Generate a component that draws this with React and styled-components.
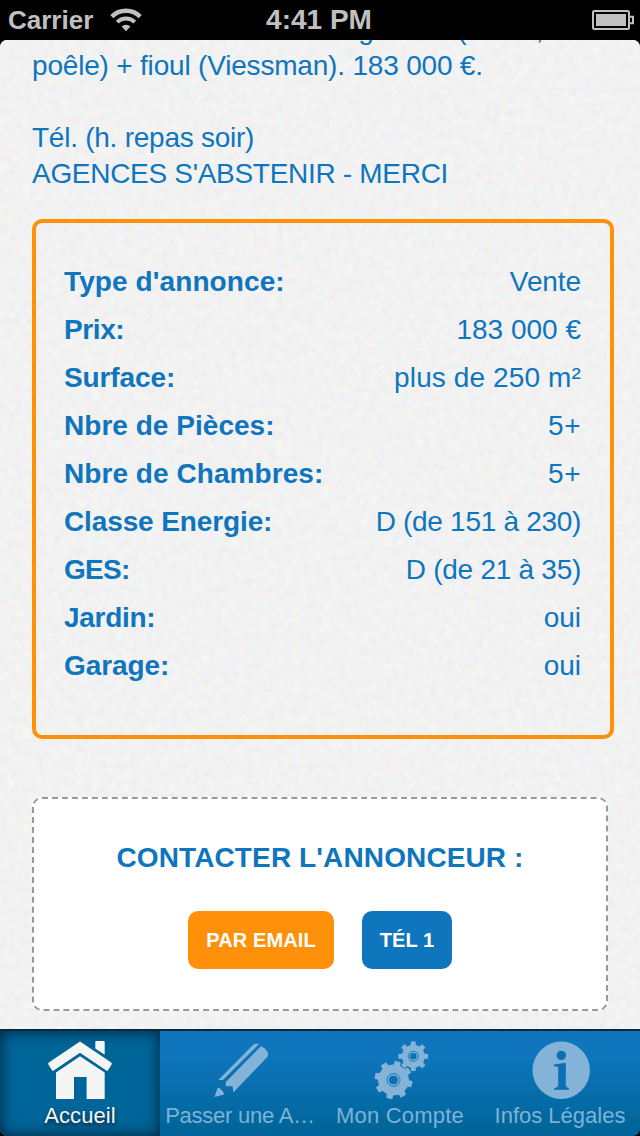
import React from "react";
import styled, { createGlobalStyle, css } from "styled-components";

const GlobalStyle = createGlobalStyle`
  body {
    margin: 0;
    background: #000;
  }

  * {
    box-sizing: border-box;
  }
`;

const Screen = styled.div`
  width: 640px;
  height: 1136px;
  display: flex;
  flex-direction: column;
  overflow: hidden;
  background: #000;
  color: #0f75bd;
  font-family: "Liberation Sans", Arial, sans-serif;
  font-size: 28px;
  white-space: nowrap;
`;

const StatusBar = styled.header`
  flex: none;
  height: 40px;
  padding: 0 6px 0 8px;
  display: grid;
  grid-template-columns: 1fr auto 1fr;
  align-items: center;
  color: #c0c0c0;
  font-size: 26px;
  font-weight: 700;
  line-height: 40px;
`;

const Carrier = styled.div`
  display: flex;
  align-items: center;
  gap: 17px;
`;

const Clock = styled.div`
  margin-right: 4px;
  font-size: 28px;
`;

const Battery = styled.div`
  display: flex;
  justify-content: flex-end;
`;

const Content = styled.main`
  position: relative;
  flex: 1;
  min-height: 0;
  overflow: hidden;
  padding: 0 26px 0 32px;
  background: #f1f1f1;
  border-radius: 7px 7px 0 0;
`;

const Paper = styled.svg`
  position: absolute;
  inset: 0;
  width: 100%;
  height: 100%;
`;

const Scrolled = styled.div`
  position: relative;
  margin-top: -28px;
`;

const Description = styled.div`
  line-height: 36px;
`;

const Line = styled.div`
  height: 36px;
  letter-spacing: ${({ $track }) => $track || 0}px;
`;

const Details = styled.dl`
  margin: 27px 0 0;
  height: 520px;
  padding: 35px 29px 35px 28px;
  border: 4px solid #ff900a;
  border-radius: 10px;
`;

const Row = styled.div`
  display: flex;
  justify-content: space-between;
  height: 48px;
  line-height: 48px;
`;

const Label = styled.dt`
  font-weight: 700;
  letter-spacing: ${({ $track }) => $track || 0}px;
`;

const Value = styled.dd`
  margin: 0;
  letter-spacing: ${({ $track }) => $track || 0}px;
`;

const Contact = styled.section`
  width: 576px;
  height: 214px;
  margin-top: 58px;
  padding-top: 41px;
  background: #fff;
  border: 2px dashed #999;
  border-radius: 10px;
  text-align: center;
`;

const Heading = styled.h2`
  margin: 0;
  font-size: 28px;
  line-height: 36px;
  letter-spacing: 0.12px;
`;

const Actions = styled.div`
  display: flex;
  justify-content: center;
  gap: 28px;
  margin-top: 35px;
`;

const Button = styled.button`
  height: 58px;
  width: ${({ $wide }) => ($wide ? 146 : 90)}px;
  padding: 0;
  border: none;
  border-radius: 10px;
  background: ${({ $primary }) => ($primary ? "#ff900a" : "#0f75bd")};
  color: #fff;
  font: 700 20px "Liberation Sans", Arial, sans-serif;
  letter-spacing: 0.1px;
`;

const TabBar = styled.nav`
  flex: none;
  height: 107px;
  display: flex;
  border-top: 2px solid #06293d;
  border-radius: 0 0 7px 7px;
  overflow: hidden;
  background: linear-gradient(#0f75bd 0%, #0f75bd 24%, #00669a 92%, #00629a 100%);
`;

const Tab = styled.a`
  width: 160px;
  display: flex;
  flex-direction: column;
  align-items: center;
  padding-top: 8px;
  color: #7eb2d6;
  font-size: 22px;
  line-height: 26px;

  svg {
    flex: none;
    display: block;
  }

  span {
    margin-top: 2px;
    letter-spacing: ${({ $track }) => $track || 0}px;
  }

  ${({ $active }) =>
    $active &&
    css`
      color: #f5f5f5;
      background: #00669a;
      box-shadow: inset 0 0 16px #002138;
      text-shadow: 0 2px 4px rgba(0, 0, 0, 0.7);
    `}
`;

// outline of a toothed wheel, angles in degrees
const gearPath = (cx, cy, outer, root, start) => {
  const points = [];
  for (let i = 0; i < 8; i++) {
    [[-12.5, root], [-9, outer], [9, outer], [12.5, root]].forEach(([a, r]) => {
      const t = ((start + i * 45 + a) * Math.PI) / 180;
      points.push(`${(cx + r * Math.sin(t)).toFixed(2)} ${(cy - r * Math.cos(t)).toFixed(2)}`);
    });
  }
  return `M${points.join("L")}Z`;
};

const WifiIcon = () => (
  <svg width="32" height="24" viewBox="0 0 32 24" fill="none" stroke="#c0c0c0">
    <path d="M1.8 8.6a20.2 20.2 0 0 1 28.4 0" strokeWidth="4.4" />
    <path d="M7.2 14.2a12.4 12.4 0 0 1 17.6 0" strokeWidth="4" />
    <path d="M16 23.2l-4.4-4.6a6.2 6.2 0 0 1 8.8 0z" fill="#c0c0c0" stroke="none" />
  </svg>
);

const BatteryIcon = () => (
  <svg width="42" height="20" viewBox="0 0 42 20">
    <rect x="1" y="1" width="36" height="18" rx="1.5" fill="none" stroke="#c0c0c0" strokeWidth="2" />
    <rect x="4" y="4" width="30" height="12" fill="#c0c0c0" />
    <path d="M38 6.8h3v6.4h-3" fill="none" stroke="#c0c0c0" strokeWidth="2" />
  </svg>
);

const HomeIcon = () => (
  <svg width="66" height="62" viewBox="0 0 66 62" fill="#f5f5f5">
    <path d="M33 2.6 64.2 23.6q1 .7.4 1.8l-3.6 5.8q-.6 1-1.7.3L33 13.7 6.7 31.5q-1.1.7-1.7-.3l-3.6-5.8q-.6-1.1.4-1.8Z" />
    <path d="M33 17.2 57.7 33.6V60H39.6V38H27V60H9V33.6Z" />
    <path d="M48.3 9.6V3q0-1 1-1h7.4q1 0 1 1v12.8Z" />
  </svg>
);

const PencilIcon = () => (
  <svg width="66" height="62" viewBox="0 0 66 62" fill="#83b4d7">
    <path d="M11.3 41 46 6q1.3-1.2 3-1.2h3.2L16 41Z" />
    <path d="M18.6 43.2 54 7.2q4.3 1.6 6.3 5.2 1.2 2.4.4 5.1L26.3 53.6 25.6 47.2H18.8Z" />
    <path d="M10.7 48.6q5 1.8 6.4 7L7.5 58Z" />
  </svg>
);

const GearsIcon = () => (
  <svg width="66" height="62" viewBox="0 0 66 62" fill="#83b4d7">
    <path d={gearPath(26.5, 41, 19.2, 15.6, 13)} />
    <path d={gearPath(46.3, 17.3, 15, 11.6, 0)} />
    <g stroke="#0b71b3" fill="none" strokeWidth="0.9">
      <circle cx="26.5" cy="41" r="6.5" />
      <circle cx="46.3" cy="17.3" r="5" />
    </g>
    <g fill="#0b71b3">
      <circle cx="26.5" cy="41" r="4.6" />
      <circle cx="46.3" cy="17.3" r="3.3" />
    </g>
  </svg>
);

const InfoIcon = () => (
  <svg width="66" height="62" viewBox="0 0 66 62">
    <circle cx="34.2" cy="31.3" r="28.7" fill="#83b4d7" />
    <g fill="#0c71b4">
      <circle cx="34.3" cy="16.4" r="4.7" />
      <rect x="31.2" y="25" width="7.6" height="24.5" />
      <rect x="27.2" y="49" width="14.6" height="1.8" />
      <path d="M26.8 25.6 38.8 23.8V26L32 28 26.8 27.2Z" />
      <path d="M31.2 46.5v3h-3zM38.8 46.5v3h2.5z" />
    </g>
  </svg>
);

const details = [
  { label: "Type d'annonce:", value: "Vente", lt: 0.1, vt: -0.1 },
  { label: "Prix:", value: "183 000 €", lt: -0.4 },
  { label: "Surface:", value: "plus de 250 m²", lt: -0.12, vt: 0.12 },
  { label: "Nbre de Pièces:", value: "5+", lt: 0.03, vt: 0.5 },
  { label: "Nbre de Chambres:", value: "5+", lt: 0.06, vt: 0.5 },
  { label: "Classe Energie:", value: "D (de 151 à 230)", lt: -0.12, vt: -0.3 },
  { label: "GES:", value: "D (de 21 à 35)", lt: -0.7, vt: -0.27 },
  { label: "Jardin:", value: "oui", lt: -0.3 },
  { label: "Garage:", value: "oui", lt: -0.1 },
];

const App = () => {
  return (
    <>
      <GlobalStyle />
      <Screen>
        <StatusBar>
          <Carrier>
            <span>Carrier</span>
            <WifiIcon />
          </Carrier>
          <Clock>4:41 PM</Clock>
          <Battery>
            <BatteryIcon />
          </Battery>
        </StatusBar>

        <Content>
          <Paper aria-hidden="true">
            <filter id="grain" x="0" y="0" width="100%" height="100%" colorInterpolationFilters="sRGB">
              <feTurbulence type="fractalNoise" baseFrequency="0.13" numOctaves="2" seed="4" />
              <feColorMatrix values="0.065 0 0 0 0.915  0 0.065 0 0 0.915  0 0 0.065 0 0.915  0 0 0 0 1" />
            </filter>
            <rect width="100%" height="100%" filter="url(#grain)" />
          </Paper>

          <Scrolled>
            <Description>
              <Line $track={0.12}>Terrains 1500 m². Chauffage bois (insert,</Line>
              <Line $track={-0.19}>poêle) + fioul (Viessman). 183 000 €.</Line>
              <Line />
              <Line $track={-0.25}>Tél. (h. repas soir)</Line>
              <Line $track={-0.3}>AGENCES S'ABSTENIR - MERCI</Line>
            </Description>

            <Details>
              {details.map(({ label, value, lt, vt }) => (
                <Row key={label}>
                  <Label $track={lt}>{label}</Label>
                  <Value $track={vt}>{value}</Value>
                </Row>
              ))}
            </Details>

            <Contact>
              <Heading>CONTACTER L'ANNONCEUR :</Heading>
              <Actions>
                <Button $primary $wide>PAR EMAIL</Button>
                <Button>TÉL 1</Button>
              </Actions>
            </Contact>
          </Scrolled>
        </Content>

        <TabBar>
          <Tab $active $track={0.1}>
            <HomeIcon />
            <span>Accueil</span>
          </Tab>
          <Tab $track={-0.25}>
            <PencilIcon />
            <span>Passer une A…</span>
          </Tab>
          <Tab $track={0.2}>
            <GearsIcon />
            <span>Mon Compte</span>
          </Tab>
          <Tab>
            <InfoIcon />
            <span>Infos Légales</span>
          </Tab>
        </TabBar>
      </Screen>
    </>
  );
};

export default App;
